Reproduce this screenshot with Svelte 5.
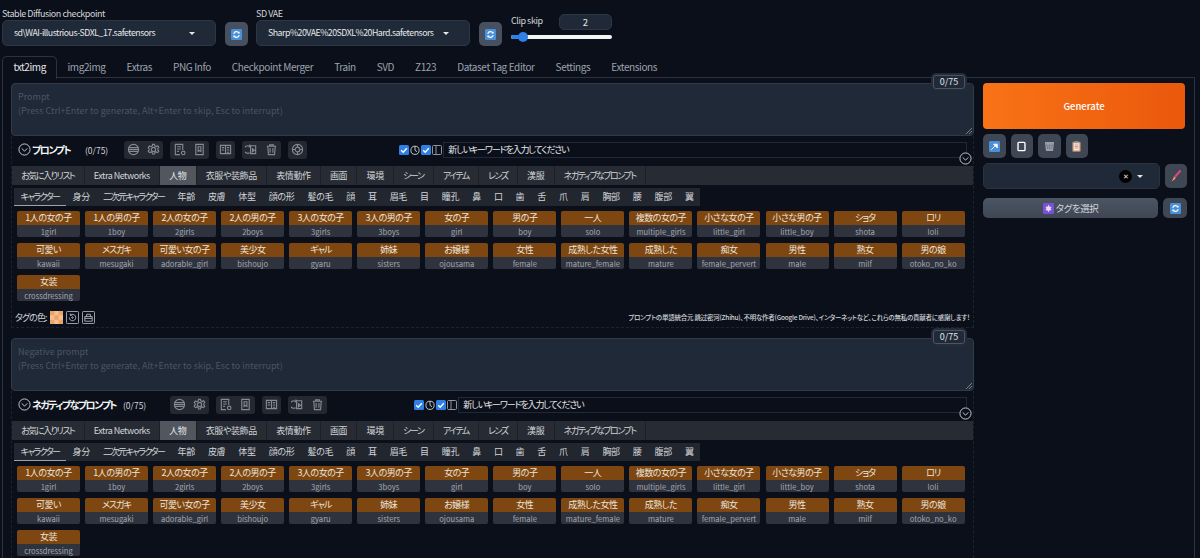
<script>
  const mainTabs = ['txt2img','img2img','Extras','PNG Info','Checkpoint Merger','Train','SVD','Z123','Dataset Tag Editor','Settings','Extensions'];
  const tabs = ['お気に入りリスト','Extra Networks','人物','衣服や装飾品','表情動作','画面','環境','シーン','アイテム','レンズ','漢服','ネガティブなプロンプト'];
  const subs = ['キャラクター','身分','二次元キャラクター','年齢','皮膚','体型','顔の形','髪の毛','顔','耳','眉毛','目','瞳孔','鼻','口','歯','舌','爪','肩','胸部','腰','腹部','翼'];
  const tags = [['1人の女の子','1girl'],['1人の男の子','1boy'],['2人の女の子','2girls'],['2人の男の子','2boys'],['3人の女の子','3girls'],['3人の男の子','3boys'],['女の子','girl'],['男の子','boy'],['一人','solo'],['複数の女の子','multiple_girls'],['小さな女の子','little_girl'],['小さな男の子','little_boy'],['ショタ','shota'],['ロリ','loli'],['可愛い','kawaii'],['メスガキ','mesugaki'],['可愛い女の子','adorable_girl'],['美少女','bishoujo'],['ギャル','gyaru'],['姉妹','sisters'],['お嬢様','ojousama'],['女性','female'],['成熟した女性','mature_female'],['成熟した','mature'],['痴女','female_pervert'],['男性','male'],['熟女','milf'],['男の娘','otoko_no_ko'],['女装','crossdressing']];
  const isKana = (s) => (s.match(/[ぁ-んァ-ヶー]/g) || []).length / s.length > 0.5;
  const isLatin = (s) => /^[A-Za-z ]+$/.test(s);
</script>

{#snippet refresh()}
  <svg class="emoji" viewBox="0 0 12 12"><rect width="12" height="12" rx="1.5" fill="#4a90d9"/><path d="M3 5.2A3.1 3.1 0 0 1 8.6 4.2M9 6.8A3.1 3.1 0 0 1 3.4 7.8" fill="none" stroke="#fff" stroke-width="1.3"/><path d="M9.4 2.6v2.4H7zM2.6 9.4V7H5z" fill="#fff"/></svg>
{/snippet}

{#snippet chevron()}
  <svg class="chev" viewBox="0 0 14 14"><circle cx="7" cy="7" r="6" fill="none" stroke="#d1d5db" stroke-width="1"/><path d="M4 5.8l3 3 3-3" fill="none" stroke="#d1d5db" stroke-width="1"/></svg>
{/snippet}

{#snippet check()}
  <svg class="cb" viewBox="0 0 10 10"><rect width="10" height="10" rx="1.5" fill="#2f7fe6"/><path d="M2.2 5.2l2 2 3.6-4" fill="none" stroke="#fff" stroke-width="1.4"/></svg>
{/snippet}

{#snippet tool(d)}
  <svg class="tool" viewBox="0 0 14 14" fill="none" stroke="#858a93" stroke-width="1.2"><path d={d}/></svg>
{/snippet}

{#snippet block(placeholder, title, negative)}
  <section class="block">
    <div class="area">
      <div class="ph">{placeholder}<br/>(Press Ctrl+Enter to generate, Alt+Enter to skip, Esc to interrupt)</div>
      <span class="counter">0/75</span>
      <svg class="grip" viewBox="0 0 6 6"><path d="M0 6L6 0M3 6L6 3" stroke="#9ca3af" stroke-width=".7"/></svg>
    </div>
    <div class="dashed">
      <div class="row" class:neg={negative}>
        {@render chevron()}
        <b class="title">{title}</b>
        <span class="count">(0/75)</span>
        <div class="tools">
          <div class="grp">
            {@render tool('M7 1.5a5.5 5.5 0 1 0 0 11a5.5 5.5 0 0 0 0-11zM2 5h10M2 7h10M2 9h10')}
            {@render tool('M7 4.7a2.3 2.3 0 1 0 0 4.6a2.3 2.3 0 0 0 0-4.6zM6 1.5h2l.4 1.6 1.5.7 1.5-.8 1.3 1.6-1 1.3v1.6l1 1.3-1.3 1.6-1.5-.8-1.5.7-.4 1.6H6l-.4-1.6-1.5-.7-1.5.8-1.3-1.6 1-1.3V6.1l-1-1.3 1.3-1.6 1.5.8 1.5-.7z')}
          </div>
          <div class="grp">
            {@render tool('M7.5 12.5H2.5v-11h8v6M4.5 4h4M4.5 6.5h4M4.5 9h2M11 8.8a1.9 1.9 0 1 0 0 3.8a1.9 1.9 0 0 0 0-3.8z')}
            {@render tool('M3 1.5h8v11H3zM5.5 9V4h3v5L7 8z')}
          </div>
          <div class="grp">
            {@render tool('M1.5 2.5h11v9h-11zM7 2.5v9M3 5h2.5M3 7.5h2.5M8.5 5H11M8.5 7.5H11M8.5 10H11')}
          </div>
          <div class="grp">
            {@render tool('M5 3.5a4 4 0 1 0 0 7M6 3h5.5v8.5H6zM5 1.5l1 2-2 .8M8 6v3.5l2.2-1.7z')}
            {@render tool('M2 3.5h10M5 3.5V2h4v1.5M3 3.5l.7 9h6.6l.7-9M5.5 5.5v5M8.5 5.5v5')}
          </div>
          {#if !negative}
            <div class="grp">
              {@render tool('M7 4.5a2.5 2.5 0 1 0 0 5a2.5 2.5 0 0 0 0-5zM7 1.5a5.5 5.5 0 1 0 0 11a5.5 5.5 0 0 0 0-11zM7 1.5v3M7 9.5v3M1.5 7h3M9.5 7h3')}
            </div>
          {/if}
        </div>
        <div class="checks">
          {@render check()}
          <svg class="cb plain" viewBox="0 0 10 10" fill="none" stroke="#d1d5db" stroke-width=".9"><circle cx="5" cy="5.3" r="4.1"/><path d="M5 1.2v4.1l2 1.4"/></svg>
          {@render check()}
          <svg class="cb plain" viewBox="0 0 10 10" fill="none" stroke="#9ca3af" stroke-width=".9"><rect x=".5" y=".5" width="9" height="9" rx="1"/><path d="M4 .5v9"/></svg>
        </div>
        <div class="kw">新しいキーワードを入力してください</div>
        <div class="chevslot">{@render chevron()}</div>
      </div>
      <nav class="tabs2">
        {#each tabs as t}<span class:on={t === '人物'} class:kana={isKana(t)} class:lat={isLatin(t)}>{t}</span>{/each}
      </nav>
      <nav class="subs">
        {#each subs as s, i}<span class:on={i === 0} class:kana={isKana(s)}>{s}</span>{/each}
      </nav>
      <div class="tags">
        {#each tags as t}
          <div class="tag"><div class="ja" class:kana={isKana(t[0])}>{t[0]}</div><div class="en">{t[1]}</div></div>
        {/each}
      </div>
      <div class="foot">
        <span class="fl">タグの色:</span>
        <svg class="sw" viewBox="0 0 12 12"><rect width="12" height="12" fill="#f6c08e"/><path d="M0 0h4v4H0zM8 0h4v4H8zM4 4h4v4H4zM0 8h4v4H0zM8 8h4v4H8z" fill="#e9a467"/></svg>
        <svg class="fi" viewBox="0 0 14 14" fill="none" stroke="#d1d5db" stroke-width=".8"><rect x=".5" y=".5" width="13" height="13" rx="1"/><path d="M3.5 7a3.5 3.5 0 1 0 1.2-2.6M4.6 2.8v1.8h1.8"/><circle cx="7" cy="7" r=".8"/></svg>
        <svg class="fi" viewBox="0 0 14 14" fill="none" stroke="#d1d5db" stroke-width=".8"><rect x=".5" y=".5" width="13" height="13" rx="1"/><path d="M3 6h8v5H3zM5 6V3.5h4V6M3 8h8"/></svg>
        <span class="thanks">プロンプトの単語統合元 跳过密河(Zhihu)、不明な作者(Google Drive)、インターネットなど、これらの無私の貢献者に感謝します！</span>
      </div>
    </div>
  </section>
{/snippet}

<div class="root">
  <header class="top">
    <div class="field">
      <label>Stable Diffusion checkpoint</label>
      <div class="select">sd\WAI-illustrious-SDXL_17.safetensors<i class="caret"></i></div>
    </div>
    <button class="ref">{@render refresh()}</button>
    <div class="field">
      <label>SD VAE</label>
      <div class="select">Sharp%20VAE%20SDXL%20Hard.safetensors<i class="caret"></i></div>
    </div>
    <button class="ref">{@render refresh()}</button>
    <div class="clip">
      <div class="cliphead"><label>Clip skip</label><span class="num">2</span></div>
      <div class="slider"><i class="fill"></i><i class="knob"></i></div>
    </div>
  </header>

  <nav class="tabs1">
    {#each mainTabs as t, i}<span class:on={i === 0}>{t}</span>{/each}
  </nav>

  <main class="panel">
    <div class="left">
      {@render block('Prompt', 'プロンプト', false)}
      {@render block('Negative prompt', 'ネガティブなプロンプト', true)}
    </div>
    <aside class="right">
      <button class="gen">Generate</button>
      <div class="smalls">
        <button>
          <svg class="emoji" viewBox="0 0 12 12"><rect width="12" height="12" rx="1.5" fill="#4a90d9"/><path d="M2.5 9.5L7 5M5 3.5h4v4z" stroke="#fff" fill="#fff"/></svg>
        </button>
        <button>
          <svg class="emoji" viewBox="0 0 12 12" fill="none" stroke="#fff" stroke-width="1.5"><rect x="2.2" y="1.5" width="7.6" height="9" rx="1"/></svg>
        </button>
        <button>
          <svg class="emoji" viewBox="0 0 12 12"><path d="M1 1h10l-1.2 10H2.2z" fill="#9aa0ab"/><path d="M3 3l1 6M6 3v6M9 3l-1 6M2.5 5h7M2.8 7.5h6.4" stroke="#6b7280" stroke-width=".6"/></svg>
        </button>
        <button>
          <svg class="emoji" viewBox="0 0 12 12"><rect x="1.5" y=".8" width="9" height="10.8" rx="1" fill="#c58f62"/><rect x="2.8" y="2.2" width="6.4" height="8.2" fill="#efe6dc"/><rect x="4" y=".2" width="4" height="2.2" fill="#8d98a8"/><path d="M4 4.4h4M4 6h4M4 7.6h4" stroke="#d1707a" stroke-width=".7"/></svg>
        </button>
      </div>
      <div class="stylerow">
        <div class="styles"><span class="x">✕</span><i class="caret"></i></div>
        <button class="brush">
          <svg class="emoji big" viewBox="0 0 14 14"><path d="M11.5 1.5L5 9" stroke="#e0457b" stroke-width="2"/><path d="M5.2 8L2.5 12.5 6.6 9.6z" fill="#f3b36b"/></svg>
        </button>
      </div>
      <div class="tagrow">
        <button class="pick">
          <svg class="emoji" viewBox="0 0 12 12"><rect width="12" height="12" rx="1.5" fill="#7c4fd6"/><path d="M6 2l3.4 6H2.6zM6 10L2.6 4h6.8z" fill="#e6dcfa"/></svg>
          <span>タグを選択</span>
        </button>
        <button class="ref2">{@render refresh()}</button>
      </div>
    </aside>
  </main>
</div>

<style>
  :global(body) { margin: 0; background: #0b0f19; overflow: hidden; }
  .root {
    width: 1200px; height: 558px; overflow: hidden; box-sizing: border-box;
    background: #0b0f19; color: #e5e7eb;
    font-family: "Noto Sans CJK JP", "Noto Sans", sans-serif;
    font-feature-settings: "palt";
  }
  button { border: 0; padding: 0; font: inherit; color: inherit; display: flex; align-items: center; justify-content: center; }
  .top { display: flex; height: 48px; padding: 0 0 0 2px; box-sizing: border-box; align-items: flex-start; }
  .field { width: 214px; padding-top: 7px; }
  .field label, .cliphead label { display: block; font-size: 9px; letter-spacing: -0.45px; line-height: 13px; color: #d1d5db; white-space: nowrap; }
  .select {
    height: 26px; border: 1px solid #2d3644; border-radius: 5px; background: #1f2937;
    box-sizing: border-box; padding: 0 20px 0 11px; display: flex; align-items: center; justify-content: space-between;
    font-size: 8.8px; letter-spacing: -0.5px; line-height: 22px; color: #e5e7eb; white-space: nowrap;
  }
  .caret { width: 0; height: 0; border: 3px solid transparent; border-top: 3px solid #e5e7eb; border-bottom: 0; display: block; flex: none; }
  .ref { width: 23px; height: 24px; margin: 22px 8px 0 9px; border-radius: 5px; background: #465060; }
  .emoji { width: 11px; height: 11px; display: block; }
  .emoji.big { width: 14px; height: 14px; }
  .clip { width: 101px; margin-left: 1px; padding-top: 14px; }
  .cliphead { display: flex; justify-content: space-between; align-items: flex-start; }
  .num { width: 53px; height: 16px; border-radius: 5px; background: #1f2937; border: 1px solid #2d3644; box-sizing: border-box; font-size: 9.5px; line-height: 14px; text-align: center; }
  .slider { height: 4px; border-radius: 2px; background: #f3f4f6; margin-top: 5px; position: relative; }
  .fill { position: absolute; left: 0; top: 0; width: 13px; height: 4px; border-radius: 2px; background: #2f7fe6; }
  .knob { position: absolute; left: 7px; top: -3px; width: 10px; height: 10px; border-radius: 50%; background: #2f7fe6; }

  .tabs1 { display: flex; height: 22px; margin: 8px 0 0 2px; font-size: 10px; letter-spacing: -0.4px; line-height: 20px; color: #9ca3af; }
  .tabs1 span { padding: 0 10px; border: 1px solid transparent; border-bottom: 0; margin-right: -1px; }
  .tabs1 .on { color: #e5e7eb; border-color: #2b3341; border-radius: 5px 5px 0 0; background: #0b0f19; position: relative; z-index: 1; height: 22px; padding: 0 10.5px; }

  .panel { display: flex; margin: -1px 5px 0 2px; border: 1px solid #2b3341; padding: 5px 0 0 8px; height: 600px; gap: 9px; box-sizing: border-box; }
  .left { width: 963px; flex: none; }
  .right { width: 204px; flex: none; }

  .block { margin-bottom: 10px; height: 245px; }
  .area { height: 53px; box-sizing: border-box; background: #1f2937; border: 1px solid #2f3a4a; border-radius: 4px; position: relative; padding: 6px 6px; }
  .ph { font-size: 9px; line-height: 13.5px; color: #4b5563; }
  .counter { position: absolute; top: -9px; right: 8px; width: 32px; height: 14px; box-sizing: border-box; border: 1.5px solid #4b5563; border-radius: 3px; background: #1f2937; box-shadow: 0 0 0 2px #252c38; font-size: 9px; line-height: 11px; text-align: center; color: #e5e7eb; }
  .grip { position: absolute; right: 1px; bottom: 1px; width: 6px; height: 6px; }
  .dashed { border: 1px dashed #1b2230; border-top: 0; height: 192px; box-sizing: border-box; position: relative; }

  .row { display: flex; align-items: center; height: 30px; padding: 0 0 3px 6px; box-sizing: border-box; }
  .chev { width: 13px; height: 13px; flex: none; display: block; }
  .title { font-size: 10px; letter-spacing: -1.55px; margin-left: 1px; color: #f3f4f6; width: 38px; white-space: nowrap; }
  .row.neg .title { width: 84px; }
  .count { font-size: 8.5px; margin-left: 15px; color: #d1d5db; white-space: nowrap; }
  .row.neg .count { margin-left: 7px; }
  .tools { display: flex; gap: 7px; margin-left: 16px; }
  .row.neg .tools { margin-left: 24px; }
  .grp { display: flex; align-items: center; justify-content: center; gap: 7px; height: 18px; padding: 0 3px; background: #252830; border-radius: 3px; }
  .tool { width: 13px; height: 13px; display: block; }
  .checks { display: flex; align-items: center; gap: 1px; margin-left: 92px; }
  .row.neg .checks { margin-left: 87px; }
  .cb { width: 10px; height: 10px; display: block; }
  .kw { flex: 1; height: 16px; margin-left: 1px; margin-right: 6px; border: 1px solid #1f2937; box-sizing: border-box; font-size: 9px; letter-spacing: -1.15px; line-height: 13px; padding-left: 4px; color: #e5e7eb; }
  .chevslot { position: absolute; right: 1px; top: 16px; background: #0b0f19; border-radius: 50%; }

  .tabs2 { display: flex; height: 19px; background: #272b33; font-size: 9px; letter-spacing: -0.4px; line-height: 19px; color: #d1d5db; }
  .tabs2 span { padding: 0 9.2px; border-right: 1px solid #1d2027; white-space: nowrap; }
  .tabs2 .on { background: #52565e; color: #e5e7eb; }
  .tabs2 .kana, .subs .kana { letter-spacing: -1.5px; }
  .tabs2 .lat { letter-spacing: -0.5px; }
  .subs { display: flex; width: fit-content; height: 18px; margin: 3px 0 0 2px; background: #22262e; font-size: 9px; letter-spacing: -0.3px; line-height: 17px; color: #d1d5db; }
  .subs span { padding: 0 6.5px; white-space: nowrap; }
  .subs .on { border-bottom: 1px solid #9ca3af; }
  .tags { display: grid; grid-template-columns: repeat(14, 63px); column-gap: 5.05px; row-gap: 6px; margin: 5px 0 0 5px; height: 90px; }
  .tag { height: 26px; border-radius: 2px; overflow: hidden; text-align: center; }
  .ja { height: 14px; background: #7e4610; font-size: 9px; letter-spacing: -0.5px; line-height: 13px; color: #ece4da; white-space: nowrap; }
  .ja.kana { letter-spacing: -1px; }
  .en { height: 12px; background: #2f333d; font-size: 7.6px; line-height: 13px; color: #a3a8b2; white-space: nowrap; }
  .foot { display: flex; align-items: center; gap: 3px; height: 16px; margin: 8px 3px 0 3px; }
  .fl { font-size: 9px; letter-spacing: -0.9px; color: #d1d5db; width: 32px; white-space: nowrap; }
  .sw { width: 13px; height: 13px; }
  .fi { width: 13px; height: 13px; }
  .thanks { margin-left: auto; font-size: 6.5px; letter-spacing: -0.24px; font-weight: 500; color: #d1d5db; white-space: nowrap; }

  .gen { width: 202px; height: 46px; border-radius: 4px; background: linear-gradient(90deg, #f97316, #ea580c); color: #fff; font-size: 9.5px; font-weight: 500; }
  .smalls { display: flex; gap: 5px; margin-top: 5px; }
  .smalls button { width: 22.5px; height: 24px; border-radius: 5px; background: #3f4754; }
  .stylerow { display: flex; gap: 5px; margin-top: 5px; align-items: center; }
  .styles { width: 177px; height: 26px; border-radius: 5px; background: #1f2937; border: 1px solid #2a3341; box-sizing: border-box; display: flex; align-items: center; justify-content: flex-end; gap: 5px; padding-right: 16px; }
  .x { width: 13px; height: 13px; border-radius: 50%; background: #000; color: #e5e7eb; font-size: 7px; line-height: 13px; text-align: center; }
  .brush { width: 22px; height: 24px; border-radius: 5px; background: #3f4754; }
  .tagrow { display: flex; gap: 5px; margin-top: 9px; }
  .pick { width: 175px; height: 20px; border-radius: 5px; background: linear-gradient(180deg, #4b5563, #3f4754); font-size: 9.5px; letter-spacing: -0.4px; gap: 2px; color: #d1d5db; }
  .ref2 { width: 24px; height: 20px; border-radius: 5px; background: #3f4754; }
</style>
